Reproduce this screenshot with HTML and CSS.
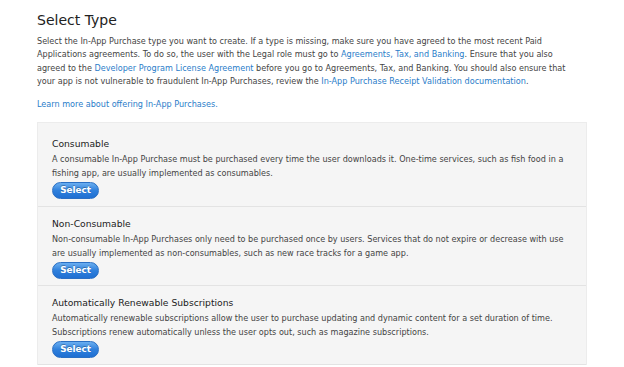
FILE: index.html
```html
<!DOCTYPE html>
<html>
<head>
  <title>Select Type</title>
  <link rel="stylesheet" href="styles.css">
</head>
<body>

  <div class="page">
    <h2>Select Type</h2>

    <p class="intro">
      Select the In-App Purchase type you want to create. If a type is missing, make sure you have agreed to the most recent Paid<br>
      Applications agreements. To do so, the user with the Legal role must go to <a href="#">Agreements, Tax, and Banking</a>. Ensure that you also<br>
      agreed to the <a href="#">Developer Program License Agreement</a> before you go to Agreements, Tax, and Banking. You should also ensure that<br>
      your app is not vulnerable to fraudulent In-App Purchases, review the <a href="#">In-App Purchase Receipt Validation documentation</a>.
    </p>

    <p class="learn"><a href="#">Learn more about offering In-App Purchases.</a></p>

    <div class="types">
      <div class="type first">
        <h4>Consumable</h4>
        <p>A consumable In-App Purchase must be purchased every time the user downloads it. One-time services, such as fish food in a<br>
          fishing app, are usually implemented as consumables.</p>
        <button class="select-btn">Select</button>
      </div>

      <div class="type">
        <h4>Non-Consumable</h4>
        <p>Non-consumable In-App Purchases only need to be purchased once by users. Services that do not expire or decrease with use<br>
          are usually implemented as non-consumables, such as new race tracks for a game app.</p>
        <button class="select-btn">Select</button>
      </div>

      <div class="type">
        <h4>Automatically Renewable Subscriptions</h4>
        <p>Automatically renewable subscriptions allow the user to purchase updating and dynamic content for a set duration of time.<br>
          Subscriptions renew automatically unless the user opts out, such as magazine subscriptions.</p>
        <button class="select-btn">Select</button>
      </div>
    </div>
  </div>

</body>
</html>
```

FILE: styles.css
```css
body {
  margin: 0;
  background: #ffffff;
  font-family: 'DejaVu Sans', Verdana, sans-serif;
  color: #444;
}

.page {
  width: 550px;
  padding: 10px 0 0 37px;
}

h2 {
  margin: 0 0 5px 0;
  font-size: 14px;
  font-weight: normal;
  color: #222;
  line-height: 20px;
}

.intro {
  margin: 0;
  font-size: 8.1px;
  line-height: 13.4px;
  white-space: nowrap;
}

a {
  color: #2a7dc9;
  text-decoration: none;
}

.learn {
  margin: 9px 0 0 0;
  font-size: 8.1px;
  line-height: 13px;
}

.types {
  margin-top: 11px;
  background: #f5f5f5;
  border: 1px solid #ececec;
  border-bottom: none;
}

.type {
  padding: 10px 14px 6px 14px;
  border-bottom: 1px solid #e3e3e3;
}

.type.first {
  padding-top: 14px;
  padding-bottom: 7px;
}

.type h4 {
  margin: 0 0 1px 0;
  font-size: 9.2px;
  font-weight: normal;
  color: #222;
  line-height: 14px;
}

.type p {
  margin: 0 0 2px 0;
  font-size: 8.1px;
  line-height: 14px;
  white-space: nowrap;
}

.select-btn {
  display: block;
  width: 47px;
  height: 17px;
  padding: 0;
  border: 1px solid #2a6fc4;
  border-radius: 9px;
  background: linear-gradient(#6aaef0, #2f80dc 50%, #1f6fd2);
  color: #fff;
  font-family: 'DejaVu Sans', Verdana, sans-serif;
  font-size: 8.8px;
  font-weight: bold;
  text-shadow: 0 -1px 0 rgba(0, 0, 0, 0.25);
  cursor: pointer;
}
```
